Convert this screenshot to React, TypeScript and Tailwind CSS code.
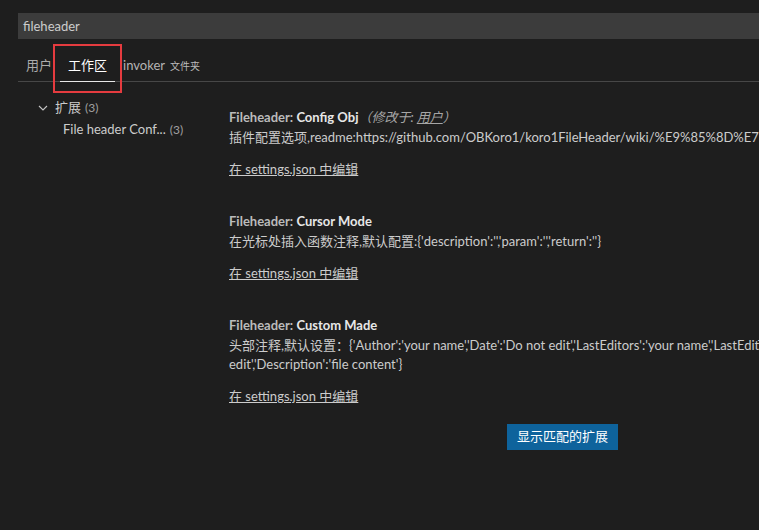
import React from "react";

const font = { fontFamily: '"Lato", "Noto Sans CJK SC", sans-serif' };

function Setting({
  name,
  modified,
  lines,
}: {
  name: string;
  modified?: boolean;
  lines: string[];
}) {
  return (
    <div className="flex flex-col">
      <div className="h-[22px] leading-[22px] text-[13px] whitespace-nowrap">
        <span className="font-bold text-[#bbbbbb]">Fileheader: </span>
        <span className="font-bold text-[#e7e7e7]">{name}</span>
        {modified && (
          <span className="italic text-[#a6a6a6]">
            （修改于: <span className="underline">用户</span>）
          </span>
        )}
      </div>
      {lines.map((l, i) => (
        <div key={i} className="leading-[19px] text-[13px] text-[#cccccc] whitespace-nowrap">
          {l}
        </div>
      ))}
      <div className="mt-[11px] h-[22px] leading-[22px] text-[13px] text-[#cccccc] underline whitespace-nowrap">
        在 settings.json 中编辑
      </div>
    </div>
  );
}

export default function App() {
  return (
    <div
      className="relative w-[759px] h-[530px] bg-[#1e1e1e] overflow-hidden"
      style={font}
    >
      {/* search */}
      <div className="ml-[18px] mt-[13px] h-[26px] bg-[#3c3c3c] flex items-center pl-[5px] pt-[1px] text-[13px] text-[#cccccc]">
        fileheader
      </div>

      {/* tabs */}
      <div className="ml-[18px] h-[43px] border-b border-[#474747] flex items-end">
        <div className="px-[8px] h-[42px] pt-[12px] flex items-center text-[13px] text-[#ababab]">用户</div>
        <div className="relative px-[8px] h-[42px] pt-[12px] flex items-center text-[13px] text-[#ffffff]">
          工作区
          <div className="absolute left-0 right-0 -bottom-px h-px bg-[#e7e7e7]" />
        </div>
        <div className="px-[8px] h-[42px] pt-[12px] flex items-center text-[13px] text-[#b4b4b4] gap-[5px]">
          invoker<span className="text-[10px] text-[#bbbbbb]">文件夹</span>
        </div>
      </div>

      {/* highlight box */}
      <div className="absolute left-[53px] top-[44px] w-[69px] h-[49px] border-2 border-[#e53b3f]" />

      <div className="flex">
        {/* tree */}
        <div className="w-[211px] shrink-0 ml-[18px] pt-[15px] flex flex-col text-[13px]">
          <div className="h-[22px] flex items-center pl-[20px] whitespace-nowrap">
            <svg width="10" height="10" viewBox="0 0 10 10" className="mr-[7px]">
              <polyline points="1,3 5,7 9,3" fill="none" stroke="#c5c5c5" strokeWidth="1.1" />
            </svg>
            <span className="text-[#cccccc]">扩展</span>
            <span className="ml-[4px] text-[#a0a0a0] text-[12px]">(3)</span>
          </div>
          <div className="h-[22px] flex items-center pl-[45px] whitespace-nowrap">
            <span className="text-[#cccccc]">File header Conf...</span>
            <span className="ml-[4px] text-[#a0a0a0] text-[12px]">(3)</span>
          </div>
        </div>

        {/* settings */}
        <div className="flex flex-col pt-[24px] min-w-0">
          <Setting
            name="Config Obj"
            modified
            lines={[
              "插件配置选项,readme:https://github.com/OBKoro1/koro1FileHeader/wiki/%E9%85%8D%E7%BD%AE",
            ]}
          />
          <div className="h-[30px]" />
          <Setting
            name="Cursor Mode"
            lines={["在光标处插入函数注释,默认配置:{'description':'','param':'','return':''}"]}
          />
          <div className="h-[30px]" />
          <Setting
            name="Custom Made"
            lines={[
              "头部注释,默认设置：{'Author':'your name','Date':'Do not edit','LastEditors':'your name','LastEditTime':'Do not",
              "edit','Description':'file content'}",
            ]}
          />
          <div className="mt-[17px] ml-[278px]">
            <button className="h-[26px] w-[111px] bg-[#0e639c] text-[13px] text-white flex items-center justify-center">
              显示匹配的扩展
            </button>
          </div>
        </div>
      </div>
    </div>
  );
}
